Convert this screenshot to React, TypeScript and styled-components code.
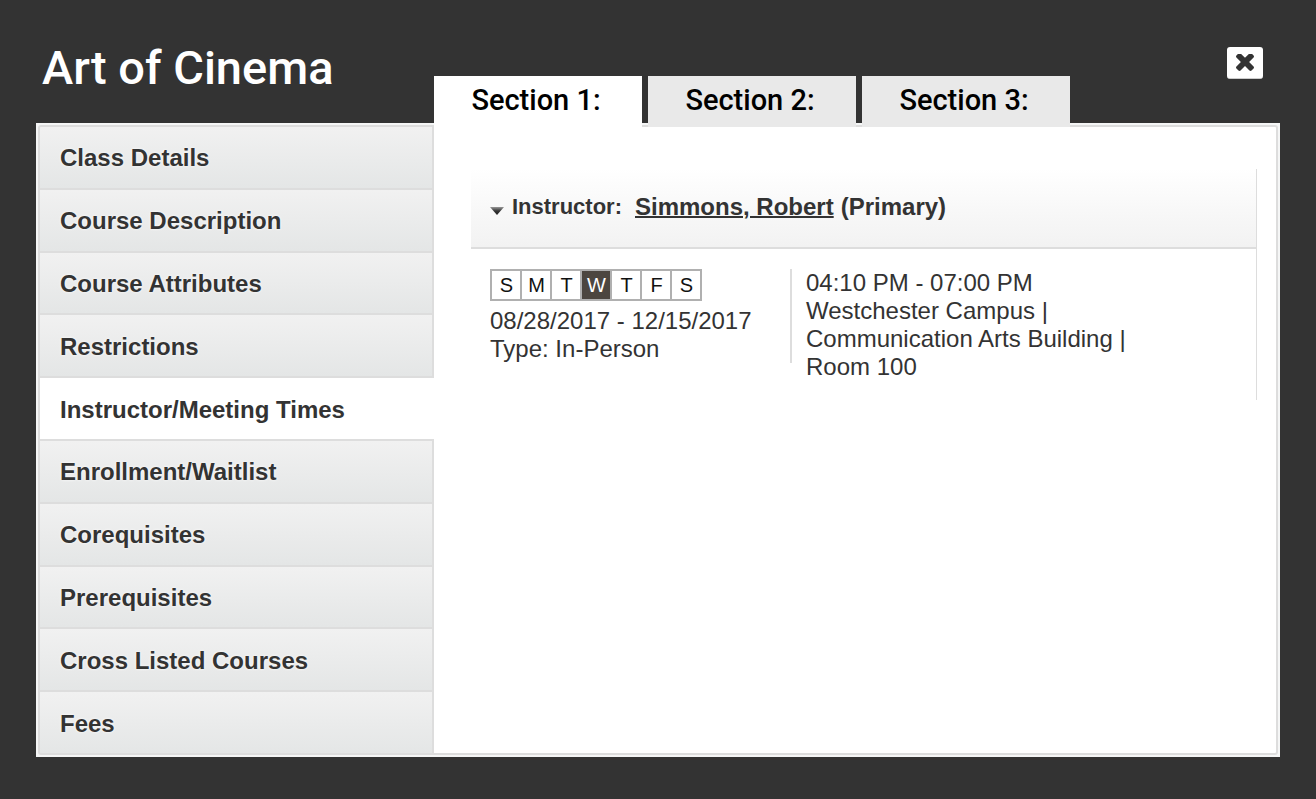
import React, { useState } from "react";
import styled, { createGlobalStyle } from "styled-components";

const GlobalStyle = createGlobalStyle`
  *, *::before, *::after { box-sizing: border-box; }
  body {
    margin: 0;
    background: #333;
    color: #333;
    font-family: "Liberation Sans", Arial, sans-serif;
    font-size: 24px;
    line-height: 28px;
  }
`;

const Dialog = styled.main`
  display: flex;
  flex-direction: column;
  min-height: 100vh;
  padding: 0 36px 42px;
`;

const Header = styled.header`
  display: flex;
  align-items: flex-end;
  height: 123px;
`;

const Title = styled.h1`
  flex: 0 0 398px;
  align-self: flex-start;
  margin: 0;
  padding: 40px 0 0 6px;
  color: #fff;
  font-family: "Franklin Gothic Medium", Roboto, sans-serif;
  font-size: 47px;
  font-weight: 500;
  line-height: 56px;
`;

const Tabs = styled.div`
  position: relative;
  z-index: 1;
  display: flex;
  gap: 6px;
  margin-bottom: -4px;
`;

const Tab = styled.button<{ $active: boolean }>`
  width: 208px;
  height: 51px;
  padding: 0 4px 3px 0;
  border: 0;
  background: ${(p) => (p.$active ? "#fff" : "#e9e9e9")};
  color: #000;
  font-family: "Franklin Gothic Medium", Roboto, sans-serif;
  font-size: 29px;
  font-weight: 500;
  line-height: 32px;
  cursor: pointer;
`;

const CloseButton = styled.button`
  display: grid;
  place-items: center;
  align-self: flex-start;
  width: 36px;
  height: 32px;
  margin: 47px 17px 0 auto;
  padding: 0;
  border: 0;
  border-bottom: 1px solid #ccc;
  border-radius: 3px;
  background: #fff;
  cursor: pointer;
`;

const Panel = styled.div`
  flex: 1;
  display: flex;
  padding: 2px;
  background: #f5f6f6;
`;

const PanelBody = styled.div`
  flex: 1;
  display: flex;
  border: 2px solid #ddd;
  border-radius: 3px;
  background: #fff;
  overflow: hidden;
`;

const SideNav = styled.nav`
  flex: 0 0 394px;
  display: flex;
`;

const NavList = styled.ul`
  flex: 1;
  display: flex;
  flex-direction: column;
  gap: 2px;
  margin: 0;
  padding: 0;
  background: #ddd;
  list-style: none;
`;

const NavItem = styled.li`
  flex: 1 0 56px;
  display: flex;
`;

const NavButton = styled.button<{ $active: boolean }>`
  flex: 1;
  padding: 2px 20px 0;
  border: 0;
  border-right: 2px solid ${(p) => (p.$active ? "#fff" : "#ddd")};
  background: ${(p) => (p.$active ? "#fff" : "linear-gradient(#f1f1f1, #e4e6e6)")};
  color: #333;
  font-family: inherit;
  font-size: 24px;
  font-weight: 700;
  line-height: 28px;
  text-align: left;
  text-shadow: 0 0 3px #fff;
  cursor: pointer;
`;

const Content = styled.section`
  flex: 1;
  min-width: 0;
  padding: 42px 19px 0 37px;
`;

const MeetingCard = styled.article`
  min-height: 231px;
  border-right: 1px solid #ddd;
`;

const InstructorBar = styled.h2`
  display: flex;
  align-items: center;
  height: 80px;
  margin: 0;
  padding: 0 19px 2px;
  border-bottom: 2px solid #ddd;
  background: linear-gradient(#fff, #f2f2f2);
  font-size: 24px;
  font-weight: 700;
  line-height: 28px;
`;

const InstructorLabel = styled.span`
  margin: 0 13px 0 8px;
  font-size: 22px;
`;

const InstructorLink = styled.a`
  margin-right: 7px;
  color: #333;
  text-decoration: underline;
  text-decoration-thickness: 2px;
`;

const Toggle = styled.svg`
  margin-top: 8px;
`;

const Meeting = styled.div`
  display: flex;
  padding: 20px 19px 0;
`;

const Schedule = styled.div`
  width: 300px;
`;

const Days = styled.ul`
  display: inline-flex;
  margin: 0 0 6px;
  padding: 0;
  border: 2px solid #b0b0b0;
  font-size: 20px;
  list-style: none;
  vertical-align: top;
`;

const Day = styled.li<{ $active: boolean }>`
  width: 30px;
  height: 28px;
  padding-left: 1px;
  border-right: 2px solid #b0b0b0;
  background: ${(p) => (p.$active ? "#4c4640" : "#fff")};
  color: ${(p) => (p.$active ? "#fff" : "#111")};
  text-align: center;
  &:last-child { width: 28px; border-right: 0; }
`;

const Divider = styled.div`
  width: 2px;
  height: 94px;
  background: #ddd;
`;

const Place = styled.div`
  max-width: 350px;
  padding-left: 14px;
`;

const Line = styled.div``;

const sections = ["Section 1:", "Section 2:", "Section 3:"];
const pages = [
  "Class Details",
  "Course Description",
  "Course Attributes",
  "Restrictions",
  "Instructor/Meeting Times",
  "Enrollment/Waitlist",
  "Corequisites",
  "Prerequisites",
  "Cross Listed Courses",
  "Fees",
];
const days = ["S", "M", "T", "W", "T", "F", "S"];

export default function App() {
  const [section, setSection] = useState(0);
  const [page, setPage] = useState(4);

  return (
    <>
      <GlobalStyle />
      <Dialog>
        <Header>
          <Title>Art of Cinema</Title>
          <Tabs role="tablist">
            {sections.map((name, i) => (
              <Tab key={name} role="tab" aria-selected={i === section} $active={i === section} onClick={() => setSection(i)}>
                {name}
              </Tab>
            ))}
          </Tabs>
          <CloseButton aria-label="Close">
            <svg width="18" height="18" viewBox="302 434 1188 1188" fill="#333" aria-hidden="true">
              <path d="M1490 1322q0 40-28 68l-136 136q-28 28-68 28t-68-28l-294-294-294 294q-28 28-68 28t-68-28l-136-136q-28-28-28-68t28-68l294-294-294-294q-28-28-28-68t28-68l136-136q28-28 68-28t68 28l294 294 294-294q28-28 68-28t68 28l136 136q28 28 28 68t-28 68l-294 294 294 294q28 28 28 68z" />
            </svg>
          </CloseButton>
        </Header>
        <Panel>
          <PanelBody>
            <SideNav>
              <NavList>
                {pages.map((name, i) => (
                  <NavItem key={name}>
                    <NavButton $active={i === page} onClick={() => setPage(i)}>
                      {name}
                    </NavButton>
                  </NavItem>
                ))}
              </NavList>
            </SideNav>
            <Content>
              <MeetingCard>
                <InstructorBar>
                  <Toggle width="14" height="8" viewBox="0 0 14 8" aria-hidden="true">
                    <defs>
                      <linearGradient id="toggle" x1="0" y1="0" x2="0" y2="1">
                        <stop offset="0" stopColor="#999" />
                        <stop offset="0.5" stopColor="#333" />
                        <stop offset="1" stopColor="#222" />
                      </linearGradient>
                    </defs>
                    <path d="M0 0h14L7 8z" fill="url(#toggle)" />
                  </Toggle>
                  <InstructorLabel>Instructor:</InstructorLabel>
                  <InstructorLink href="#instructor">Simmons, Robert</InstructorLink>
                  <span>(Primary)</span>
                </InstructorBar>
                <Meeting>
                  <Schedule>
                    <Days>
                      {days.map((d, i) => (
                        <Day key={i} $active={i === 3}>
                          {d}
                        </Day>
                      ))}
                    </Days>
                    <Line>08/28/2017 - 12/15/2017</Line>
                    <Line>Type: In-Person</Line>
                  </Schedule>
                  <Divider />
                  <Place>
                    <Line>04:10 PM - 07:00 PM</Line>
                    <Line>Westchester Campus |</Line>
                    <Line>Communication Arts Building |</Line>
                    <Line>Room 100</Line>
                  </Place>
                </Meeting>
              </MeetingCard>
            </Content>
          </PanelBody>
        </Panel>
      </Dialog>
    </>
  );
}
